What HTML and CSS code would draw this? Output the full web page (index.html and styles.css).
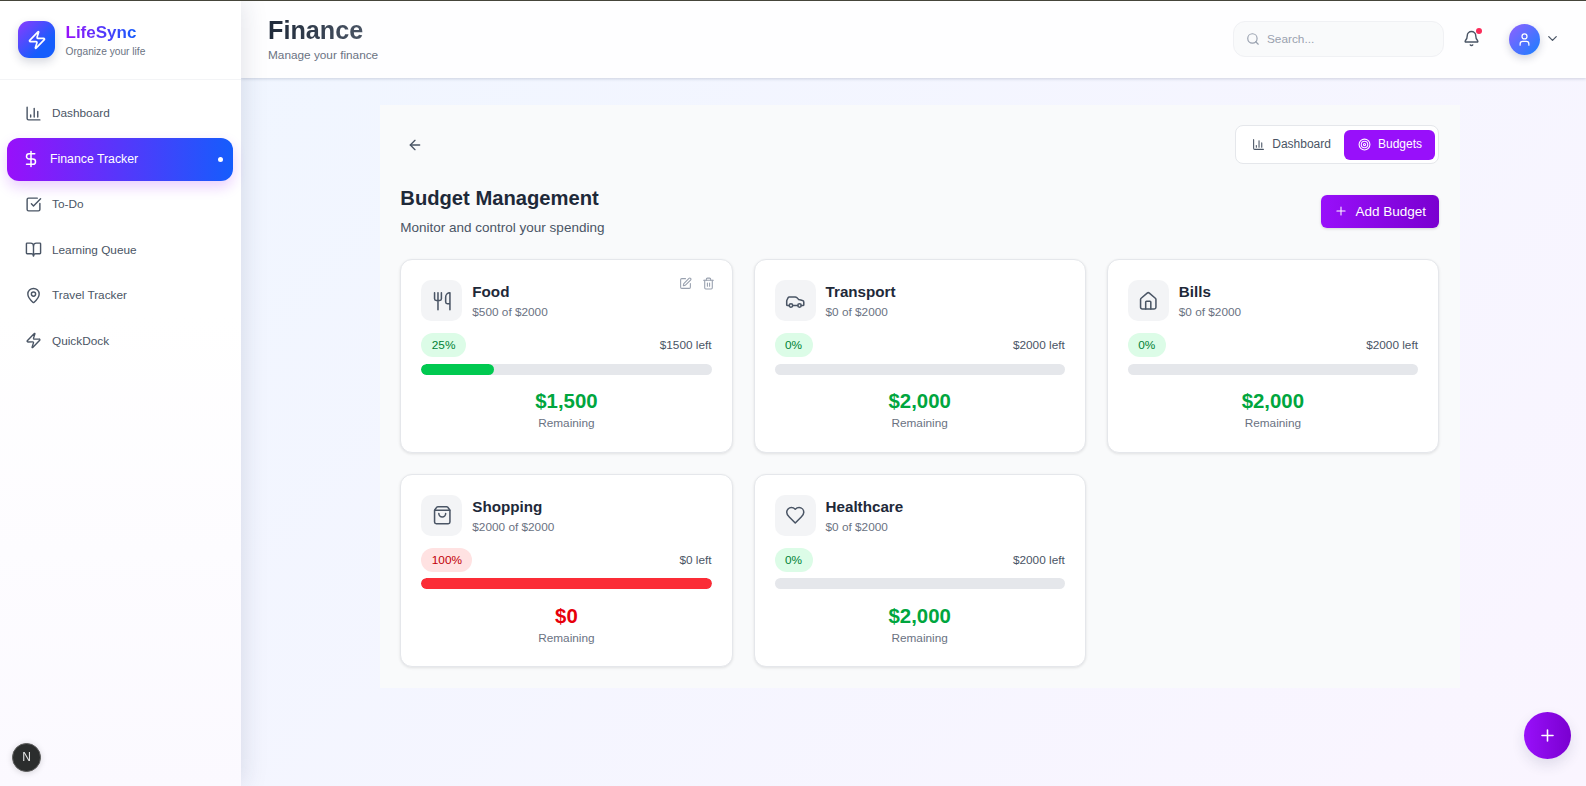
FILE: index.html
```html
<!DOCTYPE html>
<html lang="en">
<head>
<meta charset="UTF-8" />
<meta name="viewport" content="width=device-width, initial-scale=1" />
<title>LifeSync - Finance</title>
<link rel="stylesheet" href="styles.css">
</head>
<body>

<svg class="sprite" xmlns="http://www.w3.org/2000/svg">
  <symbol id="i-chart" viewBox="0 0 24 24"><path d="M3 3v16a2 2 0 0 0 2 2h16"/><path d="M18 17V9"/><path d="M13 17V5"/><path d="M8 17v-3"/></symbol>
  <symbol id="i-zap" viewBox="0 0 24 24"><path d="M4 14a1 1 0 0 1-.78-1.63l9.9-10.2a.5.5 0 0 1 .86.46l-1.92 6.02A1 1 0 0 0 13 10h7a1 1 0 0 1 .78 1.63l-9.9 10.2a.5.5 0 0 1-.86-.46l1.92-6.02A1 1 0 0 0 11 14z"/></symbol>
  <symbol id="i-dollar" viewBox="0 0 24 24"><path d="M12 2v20"/><path d="M17 5H9.5a3.5 3.5 0 0 0 0 7h5a3.5 3.5 0 0 1 0 7H6"/></symbol>
  <symbol id="i-check" viewBox="0 0 24 24"><path d="M21 10.656V19a2 2 0 0 1-2 2H5a2 2 0 0 1-2-2V5a2 2 0 0 1 2-2h12.344"/><path d="m9 11 3 3L22 4"/></symbol>
  <symbol id="i-book" viewBox="0 0 24 24"><path d="M12 7v14"/><path d="M3 18a1 1 0 0 1-1-1V4a1 1 0 0 1 1-1h5a4 4 0 0 1 4 4 4 4 0 0 1 4-4h5a1 1 0 0 1 1 1v13a1 1 0 0 1-1 1h-6a3 3 0 0 0-3 3 3 3 0 0 0-3-3z"/></symbol>
  <symbol id="i-pin" viewBox="0 0 24 24"><path d="M20 10c0 4.993-5.539 10.193-7.399 11.799a1 1 0 0 1-1.202 0C9.539 20.193 4 14.993 4 10a8 8 0 0 1 16 0"/><circle cx="12" cy="10" r="3"/></symbol>
  <symbol id="i-search" viewBox="0 0 24 24"><circle cx="11" cy="11" r="8"/><path d="m21 21-4.3-4.3"/></symbol>
  <symbol id="i-bell" viewBox="0 0 24 24"><path d="M10.268 21a2 2 0 0 0 3.464 0"/><path d="M3.262 15.326A1 1 0 0 0 4 17h16a1 1 0 0 0 .74-1.673C19.41 13.956 18 12.499 18 8A6 6 0 0 0 6 8c0 4.499-1.411 5.956-2.738 7.326"/></symbol>
  <symbol id="i-user" viewBox="0 0 24 24"><path d="M19 21v-2a4 4 0 0 0-4-4H9a4 4 0 0 0-4 4v2"/><circle cx="12" cy="7" r="4"/></symbol>
  <symbol id="i-chevron" viewBox="0 0 24 24"><path d="m6 9 6 6 6-6"/></symbol>
  <symbol id="i-back" viewBox="0 0 24 24"><path d="m12 19-7-7 7-7"/><path d="M19 12H5"/></symbol>
  <symbol id="i-target" viewBox="0 0 24 24"><circle cx="12" cy="12" r="10"/><circle cx="12" cy="12" r="6"/><circle cx="12" cy="12" r="2"/></symbol>
  <symbol id="i-plus" viewBox="0 0 24 24"><path d="M5 12h14"/><path d="M12 5v14"/></symbol>
  <symbol id="i-food" viewBox="0 0 24 24"><path d="M3 2v7c0 1.1.9 2 2 2h4a2 2 0 0 0 2-2V2"/><path d="M7 2v20"/><path d="M21 15V2a5 5 0 0 0-5 5v6c0 1.1.9 2 2 2h3Zm0 0v7"/></symbol>
  <symbol id="i-car" viewBox="0 0 24 24"><path d="M19 17h2c.6 0 1-.4 1-1v-3c0-.9-.7-1.7-1.5-1.9C18.7 10.6 16 10 16 10s-1.3-1.4-2.2-2.3c-.5-.4-1.1-.7-1.8-.7H5c-.6 0-1.1.4-1.4.9l-1.4 2.9A3.7 3.7 0 0 0 2 12v4c0 .6.4 1 1 1h2"/><circle cx="7" cy="17" r="2"/><path d="M9 17h6"/><circle cx="17" cy="17" r="2"/></symbol>
  <symbol id="i-home" viewBox="0 0 24 24"><path d="M15 21v-8a1 1 0 0 0-1-1h-4a1 1 0 0 0-1 1v8"/><path d="M3 10a2 2 0 0 1 .709-1.528l7-5.999a2 2 0 0 1 2.582 0l7 5.999A2 2 0 0 1 21 10v9a2 2 0 0 1-2 2H5a2 2 0 0 1-2-2z"/></symbol>
  <symbol id="i-bag" viewBox="0 0 24 24"><path d="M16 10a4 4 0 0 1-8 0"/><path d="M3.103 6.034h17.794"/><path d="M3.4 5.467a2 2 0 0 0-.4 1.2V20a2 2 0 0 0 2 2h14a2 2 0 0 0 2-2V6.667a2 2 0 0 0-.4-1.2l-2.1-2.8A2 2 0 0 0 17 2H7a2 2 0 0 0-1.6.8z"/></symbol>
  <symbol id="i-heart" viewBox="0 0 24 24"><path d="M19 14c1.49-1.46 3-3.21 3-5.5A5.5 5.5 0 0 0 16.5 3c-1.76 0-3 .5-4.5 2-1.5-1.5-2.74-2-4.5-2A5.5 5.5 0 0 0 2 8.5c0 2.3 1.5 4.05 3 5.5l7 7Z"/></symbol>
  <symbol id="i-edit" viewBox="0 0 24 24"><path d="M12 3H5a2 2 0 0 0-2 2v14a2 2 0 0 0 2 2h14a2 2 0 0 0 2-2v-7"/><path d="M18.375 2.625a1 1 0 0 1 3 3l-9.013 9.014a2 2 0 0 1-.853.505l-2.873.84a.5.5 0 0 1-.62-.62l.84-2.873a2 2 0 0 1 .506-.852z"/></symbol>
  <symbol id="i-trash" viewBox="0 0 24 24"><path d="M3 6h18"/><path d="M19 6v14c0 1-1 2-2 2H7c-1 0-2-1-2-2V6"/><path d="M8 6V4c0-1 1-2 2-2h4c1 0 2 1 2 2v2"/><path d="M10 11v6"/><path d="M14 11v6"/></symbol>
</svg>

<aside class="sidebar">
  <div class="brand">
    <div class="brand-logo"><svg class="icon"><use href="#i-zap"/></svg></div>
    <div>
      <div class="brand-name">LifeSync</div>
      <div class="brand-sub">Organize your life</div>
    </div>
  </div>
  <nav class="nav">
    <a class="nav-item"><svg class="icon"><use href="#i-chart"/></svg>Dashboard</a>
    <a class="nav-item active"><svg class="icon"><use href="#i-dollar"/></svg>Finance Tracker<span class="nav-dot"></span></a>
    <a class="nav-item"><svg class="icon"><use href="#i-check"/></svg>To-Do</a>
    <a class="nav-item"><svg class="icon"><use href="#i-book"/></svg>Learning Queue</a>
    <a class="nav-item"><svg class="icon"><use href="#i-pin"/></svg>Travel Tracker</a>
    <a class="nav-item"><svg class="icon"><use href="#i-zap"/></svg>QuickDock</a>
  </nav>
</aside>

<div class="main">
  <header class="topbar">
    <div>
      <h1 class="page-title">Finance</h1>
      <div class="page-sub">Manage your finance</div>
    </div>
    <div class="topbar-right">
      <div class="search"><svg class="icon"><use href="#i-search"/></svg><span>Search...</span></div>
      <div class="bell"><svg class="icon"><use href="#i-bell"/></svg><span class="bell-dot"></span></div>
      <div class="avatar"><svg class="icon"><use href="#i-user"/></svg></div>
      <svg class="icon chevron"><use href="#i-chevron"/></svg>
    </div>
  </header>

  <div class="content">
    <section class="panel">
      <div class="panel-top">
        <svg class="icon back"><use href="#i-back"/></svg>
        <div class="toggle">
          <button class="toggle-btn"><svg class="icon"><use href="#i-chart"/></svg>Dashboard</button>
          <button class="toggle-btn on"><svg class="icon"><use href="#i-target"/></svg>Budgets</button>
        </div>
      </div>

      <div class="panel-head">
        <div>
          <h2 class="panel-title">Budget Management</h2>
          <p class="panel-sub">Monitor and control your spending</p>
        </div>
        <button class="add-btn"><svg class="icon"><use href="#i-plus"/></svg>Add Budget</button>
      </div>

      <div class="cards">
        <div class="card">
          <div class="card-actions">
            <svg class="icon"><use href="#i-edit"/></svg>
            <svg class="icon"><use href="#i-trash"/></svg>
          </div>
          <div class="card-head">
            <div class="card-icon"><svg class="icon"><use href="#i-food"/></svg></div>
            <div>
              <div class="card-name">Food</div>
              <div class="card-spent">$500 of $2000</div>
            </div>
          </div>
          <div class="card-stats"><span class="pill">25%</span><span class="left">$1500 left</span></div>
          <div class="bar"><div class="bar-fill" style="width:25%"></div></div>
          <div class="amount">$1,500</div>
          <div class="remaining">Remaining</div>
        </div>

        <div class="card">
          <div class="card-head">
            <div class="card-icon"><svg class="icon"><use href="#i-car"/></svg></div>
            <div>
              <div class="card-name">Transport</div>
              <div class="card-spent">$0 of $2000</div>
            </div>
          </div>
          <div class="card-stats"><span class="pill">0%</span><span class="left">$2000 left</span></div>
          <div class="bar"><div class="bar-fill" style="width:0%"></div></div>
          <div class="amount">$2,000</div>
          <div class="remaining">Remaining</div>
        </div>

        <div class="card">
          <div class="card-head">
            <div class="card-icon"><svg class="icon"><use href="#i-home"/></svg></div>
            <div>
              <div class="card-name">Bills</div>
              <div class="card-spent">$0 of $2000</div>
            </div>
          </div>
          <div class="card-stats"><span class="pill">0%</span><span class="left">$2000 left</span></div>
          <div class="bar"><div class="bar-fill" style="width:0%"></div></div>
          <div class="amount">$2,000</div>
          <div class="remaining">Remaining</div>
        </div>

        <div class="card over">
          <div class="card-head">
            <div class="card-icon"><svg class="icon"><use href="#i-bag"/></svg></div>
            <div>
              <div class="card-name">Shopping</div>
              <div class="card-spent">$2000 of $2000</div>
            </div>
          </div>
          <div class="card-stats"><span class="pill">100%</span><span class="left">$0 left</span></div>
          <div class="bar"><div class="bar-fill" style="width:100%"></div></div>
          <div class="amount">$0</div>
          <div class="remaining">Remaining</div>
        </div>

        <div class="card">
          <div class="card-head">
            <div class="card-icon"><svg class="icon"><use href="#i-heart"/></svg></div>
            <div>
              <div class="card-name">Healthcare</div>
              <div class="card-spent">$0 of $2000</div>
            </div>
          </div>
          <div class="card-stats"><span class="pill">0%</span><span class="left">$2000 left</span></div>
          <div class="bar"><div class="bar-fill" style="width:0%"></div></div>
          <div class="amount">$2,000</div>
          <div class="remaining">Remaining</div>
        </div>
      </div>
    </section>
  </div>
</div>

<div class="next-badge">N</div>
<button class="fab"><svg class="icon"><use href="#i-plus"/></svg></button>

</body>
</html>
```

FILE: styles.css
```css
* {
  box-sizing: border-box;
}
html, body {
  height: 100%;
}
body {
  margin: 0;
  display: flex;
  overflow: hidden;
  border-top: 1px solid #45453a;
  font-family: "Liberation Sans", Arial, sans-serif;
  color: #1e2939;
  background: linear-gradient(135deg, #eff6ff, #faf5ff);
}
h1, h2, p {
  margin: 0;
}
button {
  font-family: inherit;
  border: none;
  cursor: pointer;
}
.sprite {
  display: none;
}
.icon {
  display: block;
  width: 16px;
  height: 16px;
  flex: none;
  fill: none;
  stroke: currentColor;
  stroke-width: 2;
  stroke-linecap: round;
  stroke-linejoin: round;
}

/* sidebar */
.sidebar {
  width: 241px;
  flex: none;
  position: relative;
  z-index: 2;
  background: linear-gradient(180deg, #ffffff 40%, #fbf9ff);
  box-shadow: 2px 0 24px rgba(30, 41, 80, 0.13);
}
.brand {
  height: 79px;
  padding: 20px 18px 0;
  display: flex;
  gap: 10.5px;
  border-bottom: 1px solid #f3f4f6;
}
.brand-logo {
  width: 37px;
  height: 37px;
  border-radius: 11px;
  background: linear-gradient(135deg, #8a3bff, #155dfc 70%);
  color: #fff;
  display: flex;
  align-items: center;
  justify-content: center;
  box-shadow: 0 4px 10px rgba(30, 41, 80, 0.18);
}
.brand-logo .icon {
  width: 20px;
  height: 20px;
}
.brand-name {
  font-size: 17px;
  font-weight: 700;
  line-height: 22px;
  margin-top: 1px;
  background: linear-gradient(90deg, #9810fa, #155dfc);
  -webkit-background-clip: text;
  background-clip: text;
  color: transparent;
  width: fit-content;
}
.brand-sub {
  font-size: 10.2px;
  line-height: 14px;
  margin-top: 1px;
  color: #6a7282;
}
.nav {
  padding: 11.5px 8.5px 12px 7px;
  display: flex;
  flex-direction: column;
  gap: 2.6px;
}
.nav-item {
  height: 43px;
  padding-left: 17.5px;
  display: flex;
  align-items: center;
  gap: 10.5px;
  font-size: 11.8px;
  color: #4a5565;
  border-radius: 12px;
}
.nav-item .icon {
  width: 17px;
  height: 17px;
}
.nav-item.active {
  margin: 0.5px 0 -0.5px;
  padding: 0 10px 0 14.5px;
  font-size: 12.3px;
  color: #fff;
  background: linear-gradient(90deg, #9810fa, #155dfc);
  box-shadow: 0 6px 14px rgba(152, 16, 250, 0.2);
}
.nav-item.active .icon {
  width: 18px;
  height: 18px;
}
.nav-dot {
  width: 5px;
  height: 5px;
  margin-left: auto;
  border-radius: 50%;
  background: #fff;
}

/* top bar */
.main {
  flex: 1;
  min-width: 0;
  display: flex;
  flex-direction: column;
}
.topbar {
  height: 77px;
  flex: none;
  padding: 0 26px 2px 27px;
  display: flex;
  align-items: center;
  justify-content: space-between;
  background: #fefeff;
  box-shadow: 0 1px 3px rgba(30, 41, 80, 0.18);
  position: relative;
  z-index: 1;
}
.page-title {
  font-size: 25.2px;
  font-weight: 700;
  line-height: 30px;
  background: linear-gradient(90deg, #1e2939, #4a5565);
  -webkit-background-clip: text;
  background-clip: text;
  color: transparent;
  width: fit-content;
}
.page-sub {
  font-size: 11.8px;
  line-height: 16px;
  margin-top: 2px;
  color: #6a7282;
}
.topbar-right {
  display: flex;
  align-items: center;
}
.search {
  width: 211px;
  height: 36px;
  padding-left: 12px;
  display: flex;
  align-items: center;
  gap: 7px;
  font-size: 11.8px;
  color: #99a1af;
  background: #f9fafb;
  border: 1px solid #f0f1f4;
  border-radius: 12px;
}
.search .icon {
  width: 14px;
  height: 14px;
}
.bell {
  position: relative;
  margin-left: 19px;
  color: #4a5565;
}
.bell .icon {
  width: 17px;
  height: 17px;
}
.bell-dot {
  position: absolute;
  top: -2px;
  right: -2px;
  width: 6px;
  height: 6px;
  border-radius: 50%;
  background: #fb2c5a;
}
.avatar {
  width: 31px;
  height: 31px;
  margin: 2px 0 0 29px;
  border-radius: 50%;
  color: #fff;
  background: linear-gradient(135deg, #9060ff, #2a7bff 85%);
  display: flex;
  align-items: center;
  justify-content: center;
  box-shadow: 0 3px 8px rgba(30, 41, 80, 0.2);
}
.avatar .icon {
  width: 15px;
  height: 15px;
}
.chevron {
  width: 15px;
  height: 15px;
  margin-left: 5px;
  color: #4a5565;
}

/* budgets panel */
.content {
  flex: 1;
  padding: 27px 126px 0 139px;
}
.panel {
  background: #f9fafb;
  padding: 20px 21px 21px 20.3px;
}
.panel-top {
  display: flex;
  align-items: center;
  justify-content: space-between;
}
.back {
  margin-left: 7px;
  color: #4a5565;
  width: 16px;
  height: 16px;
}
.toggle {
  height: 39px;
  padding: 4px 3px 4px 4px;
  display: flex;
  background: #fff;
  border: 1px solid #e5e7eb;
  border-radius: 8px;
}
.toggle-btn {
  height: 30px;
  padding: 0 13px 2px 14px;
  display: flex;
  align-items: center;
  gap: 7px;
  font-size: 12px;
  color: #4a5565;
  background: none;
  border-radius: 6px;
}
.toggle-btn:first-child {
  padding-left: 12px;
}
.toggle-btn .icon {
  width: 13px;
  height: 13px;
}
.toggle-btn.on {
  color: #fff;
  background: #9810fa;
}
.panel-head {
  margin-top: 20px;
  display: flex;
  align-items: center;
  justify-content: space-between;
}
.panel-title {
  font-size: 20.2px;
  font-weight: 700;
  line-height: 28px;
  color: #1e2939;
}
.panel-sub {
  margin-top: 6px;
  font-size: 13.5px;
  line-height: 20px;
  color: #4a5565;
}
.add-btn {
  height: 33px;
  padding: 0 13px;
  display: flex;
  align-items: center;
  gap: 7px;
  font-size: 13.5px;
  color: #fff;
  background: linear-gradient(90deg, #9810fa, #7a00d0);
  border-radius: 6px;
  box-shadow: 0 1px 3px rgba(0, 0, 0, 0.15);
}
.add-btn .icon {
  width: 14px;
  height: 14px;
  stroke-width: 1.8;
}

/* budget cards */
.cards {
  margin-top: 21.3px;
  display: grid;
  grid-template-columns: repeat(3, 1fr);
  gap: 21px;
}
.card {
  position: relative;
  height: 193.5px;
  padding: 20px;
  background: #fff;
  border: 1px solid #e5e7eb;
  border-radius: 12px;
  box-shadow: 0 1px 3px rgba(0, 0, 0, 0.1);
}
.card-actions {
  position: absolute;
  top: 16.5px;
  right: 16.5px;
  display: flex;
  gap: 10px;
  color: #99a1af;
}
.card-actions .icon {
  width: 13px;
  height: 13px;
}
.card-head {
  display: flex;
  align-items: center;
  gap: 10px;
}
.card-icon {
  width: 41px;
  height: 41px;
  flex: none;
  border-radius: 10px;
  color: #4a5565;
  background: #f3f4f6;
  display: flex;
  align-items: center;
  justify-content: center;
}
.card-icon .icon {
  width: 20.5px;
  height: 20.5px;
  stroke-width: 1.8;
}
.card-name {
  font-size: 15.2px;
  font-weight: 700;
  line-height: 21px;
  color: #1e2939;
}
.card-spent {
  font-size: 11.8px;
  line-height: 16px;
  margin-top: 2px;
  color: #6a7282;
}
.card-stats {
  margin-top: 12px;
  display: flex;
  align-items: center;
  justify-content: space-between;
}
.pill {
  height: 24px;
  padding: 0 10.5px;
  display: flex;
  align-items: center;
  font-size: 11.8px;
  color: #008236;
  background: #dcfce7;
  border-radius: 12px;
}
.left {
  font-size: 11.8px;
  color: #4a5565;
}
.bar {
  height: 10.6px;
  margin-top: 6.7px;
  background: #e5e7eb;
  border-radius: 6px;
  overflow: hidden;
}
.bar-fill {
  height: 100%;
  background: #00c950;
  border-radius: 6px;
}
.amount {
  margin-top: 12.5px;
  text-align: center;
  font-size: 20.4px;
  font-weight: 700;
  line-height: 28px;
  color: #00a63e;
}
.remaining {
  text-align: center;
  font-size: 11.8px;
  line-height: 16px;
  color: #6a7282;
}
.over .pill {
  color: #c10007;
  background: #ffe2e2;
}
.over .bar-fill {
  background: #fb2c36;
}
.over .amount {
  color: #e7000b;
}

/* floating bits */
.next-badge {
  position: fixed;
  left: 12px;
  bottom: 14px;
  z-index: 3;
  width: 29px;
  height: 29px;
  border-radius: 50%;
  font-size: 12px;
  line-height: 27px;
  text-align: center;
  color: #e8e8e8;
  background: #2b2d2d;
  border: 1px solid #5a5a5a;
  box-shadow: 0 1px 6px rgba(0, 0, 0, 0.15);
}
.fab {
  position: fixed;
  right: 15px;
  bottom: 27px;
  z-index: 3;
  width: 47px;
  height: 47px;
  padding: 0;
  border-radius: 50%;
  color: #fff;
  background: linear-gradient(90deg, #9810fa, #7a00d0);
  display: flex;
  align-items: center;
  justify-content: center;
  box-shadow: 0 6px 14px rgba(30, 41, 80, 0.12);
}
.fab .icon {
  width: 19px;
  height: 19px;
}
```
